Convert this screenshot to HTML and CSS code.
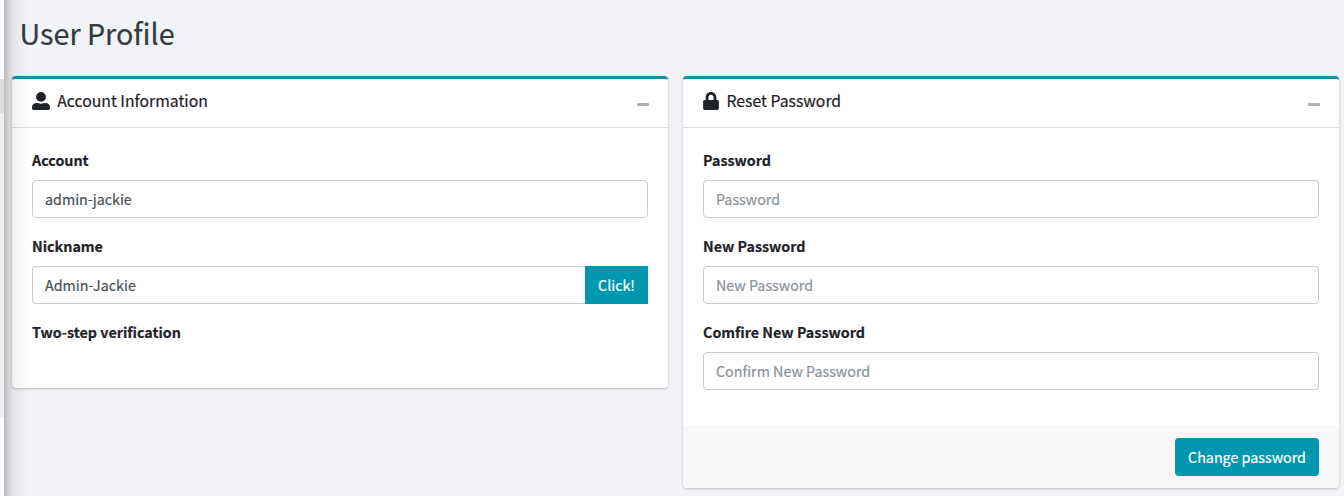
FILE: index.html
```html
<!DOCTYPE html>
<html lang="en">
<head>
<meta charset="utf-8">
<title>User Profile</title>
<link rel="stylesheet" href="styles.css">
</head>
<body>
<aside class="sidebar"><div class="sidebar-item"></div><div class="sidebar-sub"></div></aside>
<div class="sidebar-shadow"></div>
<main class="content">
  <h1 class="page-title">User Profile</h1>
  <div class="row">
    <section class="card">
      <header class="card-header">
        <svg class="icon-user" viewBox="0 0 18 18"><circle cx="9" cy="4.9" r="4.9"/><path d="M0 16.2V15.5Q0 11 4.8 11H5.8Q9 12.3 12.2 11H13.2Q18 11 18 15.5V16.2Q18 18 16.2 18H1.8Q0 18 0 16.2Z"/></svg>
        <h2 class="card-title">Account Information</h2>
        <span class="collapse"></span>
      </header>
      <div class="card-body">
        <label class="label">Account</label>
        <div class="field">admin-jackie</div>
        <label class="label">Nickname</label>
        <div class="group"><div class="field">Admin-Jackie</div><button class="btn btn-append">Click!</button></div>
        <label class="label">Two-step verification</label>
      </div>
    </section>
    <section class="card">
      <header class="card-header">
        <svg class="icon-lock" viewBox="0 0 448 512"><path d="M400 224h-24v-72C376 68.2 307.8 0 224 0S72 68.2 72 152v72H48c-26.500 0-48 21.500-48 48v192c0 26.500 21.500 48 48 48h352c26.500 0 48-21.500 48-48V272c0-26.500-21.500-48-48-48zm-104 0H152v-72c0-39.700 32.300-72 72-72s72 32.300 72 72v72z"/></svg>
        <h2 class="card-title">Reset Password</h2>
        <span class="collapse"></span>
      </header>
      <div class="card-body">
        <label class="label">Password</label>
        <div class="field placeholder">Password</div>
        <label class="label">New Password</label>
        <div class="field placeholder">New Password</div>
        <label class="label">Comfire New Password</label>
        <div class="field placeholder">Confirm New Password</div>
      </div>
      <footer class="card-footer"><button class="btn">Change password</button></footer>
    </section>
  </div>
</main>
</body>
</html>
```
FILE: styles.css
```css
* { box-sizing: border-box; }
body {
  margin: 0;
  height: 496px;
  position: relative;
  overflow: hidden;
  background: #f2f3f7;
  color: #1f2328;
  font: 14.3px/24px "Noto Sans CJK SC", "Noto Sans CJK JP", sans-serif;
  -webkit-text-stroke: .2px;
}
.sidebar {
  position: absolute;
  top: 0;
  left: 0;
  width: 4px;
  height: 496px;
  padding-top: 79px;
  background: #fff;
}
.sidebar-item { height: 34px; background: #dfdfe0; }
.sidebar-sub { height: 304px; background: #f0f0f1; }
/* The sidebar's shadow falls over the content and the first card */
.sidebar-shadow {
  position: absolute;
  z-index: 2;
  top: 0;
  left: 4px;
  width: 28px;
  height: 496px;
  pointer-events: none;
  background: linear-gradient(90deg, rgba(0,0,0,.23), rgba(0,0,0,.14) 4px, rgba(0,0,0,.075) 8px, rgba(0,0,0,.045) 12px, rgba(0,0,0,.02) 18px, transparent);
}
.content { padding: 13px 5px 0 12px; }
.page-title {
  margin: 0 0 24px 7.5px;
  font-size: 28.7px;
  font-weight: 400;
  line-height: 39px;
  color: #343a40;
}
.row { display: grid; grid-template-columns: 1fr 1fr; gap: 15px; align-items: start; }
.card {
  border-top: 3px solid #1391a5;
  border-radius: 4px;
  background: #fff;
  box-shadow: 0 0 1px rgba(0,0,0,.125), 0 1px 3px rgba(0,0,0,.2);
}
.card-header {
  display: flex;
  height: 49px;
  padding: 0 19px 0 20px;
  border-bottom: 1px solid #dcdddf;
}
.icon-user, .icon-lock { height: 18px; margin-top: 12.5px; fill: #1f2328; }
.icon-user { width: 18px; margin-right: 7.3px; }
.icon-lock { width: 16px; margin-right: 7.5px; }
.card-title { margin: 10px auto 0 0; font-size: 15.75px; font-weight: 400; line-height: 24px; }
.collapse { width: 12px; height: 3px; margin-top: 24px; border-radius: 1px; background: #a9afb6; }
.card-body { height: 260px; padding: 20px; }
.card:last-child .card-body { height: 298px; }
.label { display: block; height: 24px; margin-bottom: 8px; font-weight: 700; }
.field {
  height: 38px;
  margin-bottom: 16px;
  padding: 6px 12px;
  border: 1px solid #c9ccd0;
  border-radius: 4px;
  color: #495057;
}
.placeholder { color: #8b9299; }
.group { display: flex; margin-bottom: 16px; }
.group .field { flex: 1; margin: 0; border-right: 0; border-radius: 4px 0 0 4px; }
.btn {
  height: 38px;
  padding: 6px 0;
  width: 144px;
  border: 0;
  border-radius: 4px;
  background: #0097af;
  color: #fff;
  font: inherit;
}
.btn-append { width: 63px; border-radius: 0; }
.card-footer {
  display: flex;
  justify-content: flex-end;
  padding: 12px 20px;
  border-radius: 0 0 4px 4px;
  background: #f7f7f7;
}
```
